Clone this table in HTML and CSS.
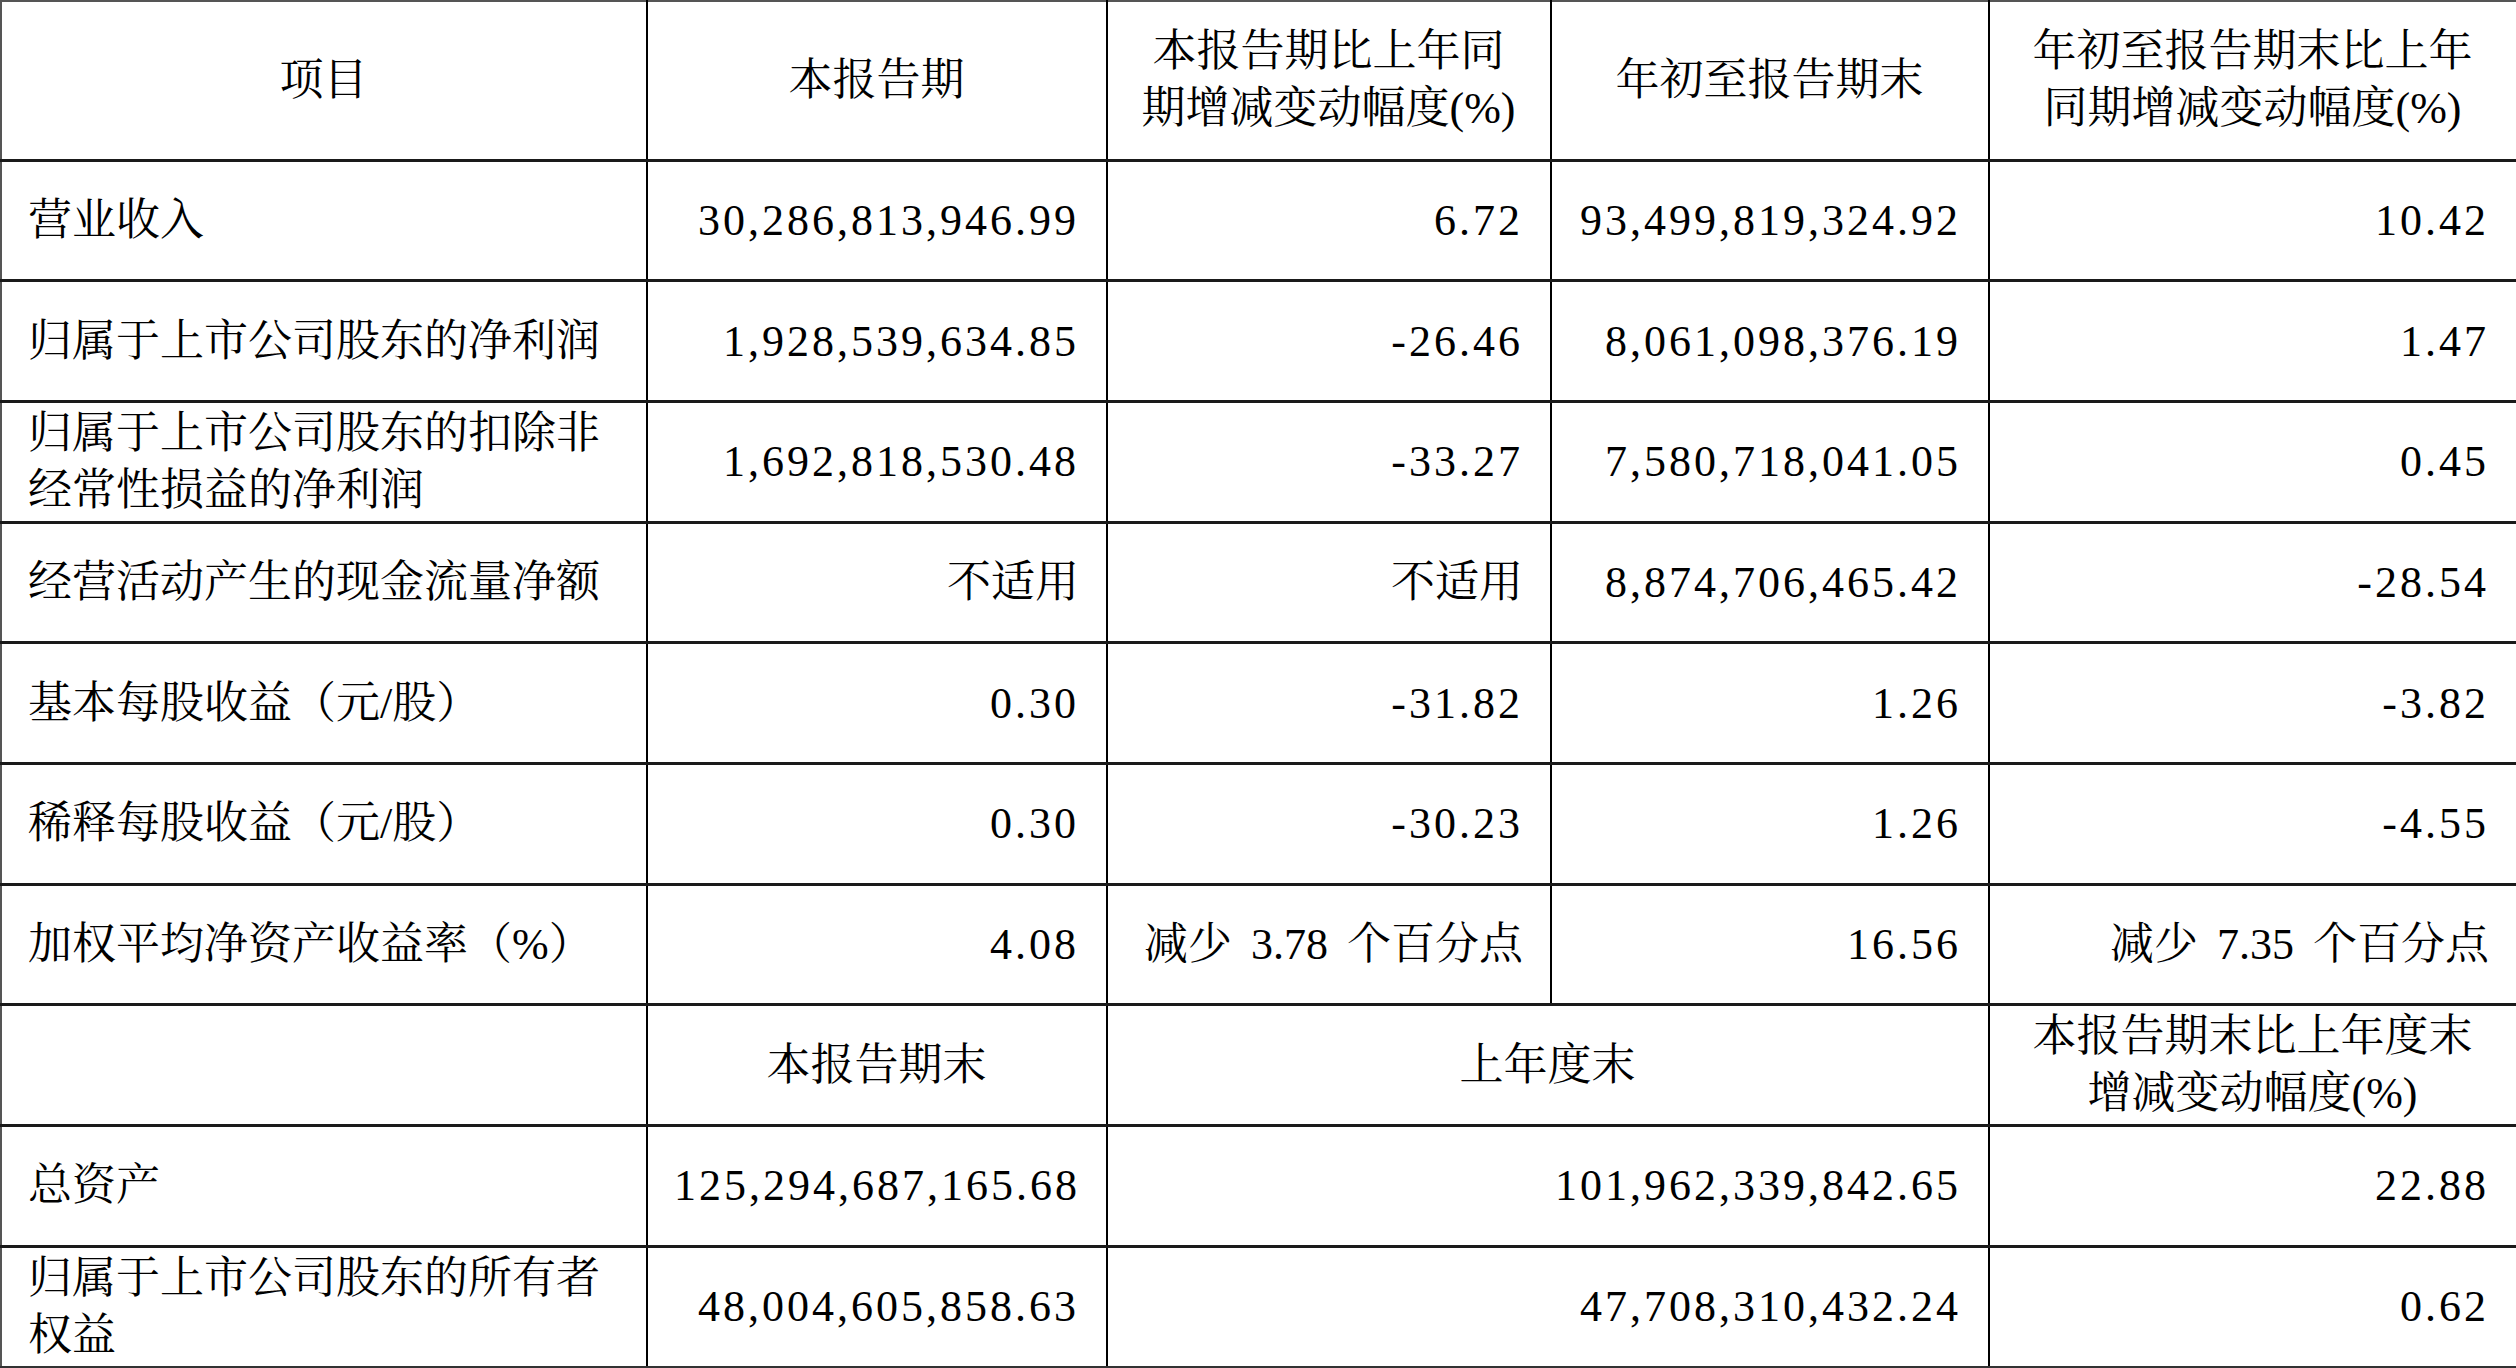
FILE: index.html
```html
<!DOCTYPE html>
<html lang="zh-CN">
<head>
<meta charset="utf-8">
<title>主要会计数据和财务指标</title>
<link rel="stylesheet" href="styles.css">
</head>
<body>
<table class="fin">
  <colgroup>
    <col class="c1"><col class="c2"><col class="c3"><col class="c4"><col class="c5">
  </colgroup>
  <tr class="head">
    <td class="ctr">项目</td>
    <td class="ctr">本报告期</td>
    <td class="ctr">本报告期比上年同<br>期增减变动幅度(%)</td>
    <td class="ctr">年初至报告期末</td>
    <td class="ctr">年初至报告期末比上年<br>同期增减变动幅度(%)</td>
  </tr>
  <tr>
    <td class="lbl">营业收入</td>
    <td class="num">30,286,813,946.99</td>
    <td class="num">6.72</td>
    <td class="num">93,499,819,324.92</td>
    <td class="num">10.42</td>
  </tr>
  <tr>
    <td class="lbl">归属于上市公司股东的净利润</td>
    <td class="num">1,928,539,634.85</td>
    <td class="num">-26.46</td>
    <td class="num">8,061,098,376.19</td>
    <td class="num">1.47</td>
  </tr>
  <tr>
    <td class="lbl">归属于上市公司股东的扣除非<br>经常性损益的净利润</td>
    <td class="num">1,692,818,530.48</td>
    <td class="num">-33.27</td>
    <td class="num">7,580,718,041.05</td>
    <td class="num">0.45</td>
  </tr>
  <tr>
    <td class="lbl">经营活动产生的现金流量净额</td>
    <td class="txt">不适用</td>
    <td class="txt">不适用</td>
    <td class="num">8,874,706,465.42</td>
    <td class="num">-28.54</td>
  </tr>
  <tr>
    <td class="lbl">基本每股收益（元/股）</td>
    <td class="num">0.30</td>
    <td class="num">-31.82</td>
    <td class="num">1.26</td>
    <td class="num">-3.82</td>
  </tr>
  <tr>
    <td class="lbl">稀释每股收益（元/股）</td>
    <td class="num">0.30</td>
    <td class="num">-30.23</td>
    <td class="num">1.26</td>
    <td class="num">-4.55</td>
  </tr>
  <tr>
    <td class="lbl">加权平均净资产收益率（%）</td>
    <td class="num">4.08</td>
    <td class="txt">减少 3.78 个百分点</td>
    <td class="num">16.56</td>
    <td class="txt">减少 7.35 个百分点</td>
  </tr>
  <tr>
    <td class="lbl"></td>
    <td class="ctr">本报告期末</td>
    <td class="ctr" colspan="2">上年度末</td>
    <td class="ctr">本报告期末比上年度末<br>增减变动幅度(%)</td>
  </tr>
  <tr>
    <td class="lbl">总资产</td>
    <td class="num">125,294,687,165.68</td>
    <td class="num" colspan="2">101,962,339,842.65</td>
    <td class="num">22.88</td>
  </tr>
  <tr>
    <td class="lbl">归属于上市公司股东的所有者<br>权益</td>
    <td class="num">48,004,605,858.63</td>
    <td class="num" colspan="2">47,708,310,432.24</td>
    <td class="num">0.62</td>
  </tr>
</table>
</body>
</html>
```

FILE: styles.css
```css
html, body {
  margin: 0;
  padding: 0;
  background: #fff;
}

.fin {
  border-collapse: collapse;
  table-layout: fixed;
  width: 2516px;
  font-family: "Liberation Serif", "Noto Serif CJK SC", "Noto Sans CJK SC", serif;
  font-size: 44px;
  line-height: 57px;
  color: #000;
}

.c1 { width: 646px; }
.c2 { width: 460px; }
.c3 { width: 444px; }
.c4 { width: 438px; }
.c5 { width: 528px; }

.fin td {
  height: 120.7px;
  padding: 0 27px 0 26px;
  border-top: 3px solid #1a1a1a;
  border-bottom: 3px solid #1a1a1a;
  border-left: 2px solid #000;
  border-right: 2px solid #000;
  vertical-align: middle;
  white-space: nowrap;
  box-sizing: border-box;
}

.fin .head td {
  height: 159px;
  border-top: 2px solid #555;
}

.fin tr td:first-child { border-left: 2px solid #555; }
.fin tr td:last-child { border-right: 2px solid #555; }
.fin tr:last-child td { border-bottom: 2px solid #333; }

.ctr { text-align: center; }
.lbl { text-align: left; }
.txt {
  text-align: right;
  word-spacing: 8px;
}
.num {
  text-align: right;
  letter-spacing: 3px;
  padding-right: 24px;
}
```
